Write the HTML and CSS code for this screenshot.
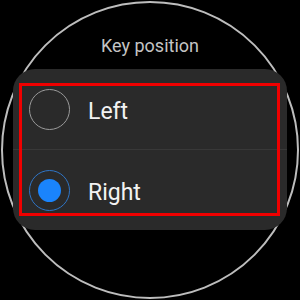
FILE: index.html
```html
<!DOCTYPE html>
<html lang="en">
<head>
  <meta charset="UTF-8">
  <meta name="viewport" content="width=device-width, initial-scale=1.0">
  <title>Key position</title>
  <link rel="stylesheet" href="styles.css">
</head>
<body>
  <div class="watch">
    <div class="title">Key position</div>
    <div class="card">
      <div class="option">
        <span class="radio"></span>
        <span class="label">Left</span>
      </div>
      <div class="divider"></div>
      <div class="option">
        <span class="radio checked"></span>
        <span class="label">Right</span>
      </div>
      <div class="highlight"></div>
    </div>
  </div>
</body>
</html>
```

FILE: styles.css
```css
body {
  margin: 0;
  padding: 0;
  width: 300px;
  height: 300px;
  background-color: #000;
  overflow: hidden;
  font-family: Roboto, 'Noto Sans', sans-serif;
}
.watch {
  box-sizing: border-box;
  width: 298px;
  height: 298px;
  margin: 1px;
  border: 2px solid #bdbdbd;
  border-radius: 50%;
  display: flex;
  flex-direction: column;
  align-items: center;
}
.title {
  margin-top: 32px;
  font-size: 18px;
  line-height: 22px;
  color: #c4c4c4;
}
.card {
  position: relative;
  box-sizing: border-box;
  width: 274px;
  margin-top: 12px;
  background-color: #2a2a2a;
  border-radius: 22px;
  display: flex;
  flex-direction: column;
}
.option {
  height: 80px;
  display: flex;
  align-items: center;
  padding-left: 16px;
  gap: 18px;
}
.divider {
  height: 1px;
  background-color: #383838;
}
.radio {
  box-sizing: border-box;
  width: 41px;
  height: 41px;
  border-radius: 50%;
  border: 1.5px solid #9a9a9a;
  display: flex;
  align-items: center;
  justify-content: center;
}
.radio.checked {
  border-color: #2f75c6;
}
.radio.checked::after {
  content: "";
  width: 23px;
  height: 23px;
  border-radius: 50%;
  background-color: #1a84fc;
}
.label {
  font-size: 23px;
  color: #f2f2f2;
  padding-top: 5px;
}
.highlight {
  position: absolute;
  left: 6px;
  top: 14px;
  width: 261px;
  height: 133px;
  box-sizing: border-box;
  border: 3px solid #f00000;
}
```
